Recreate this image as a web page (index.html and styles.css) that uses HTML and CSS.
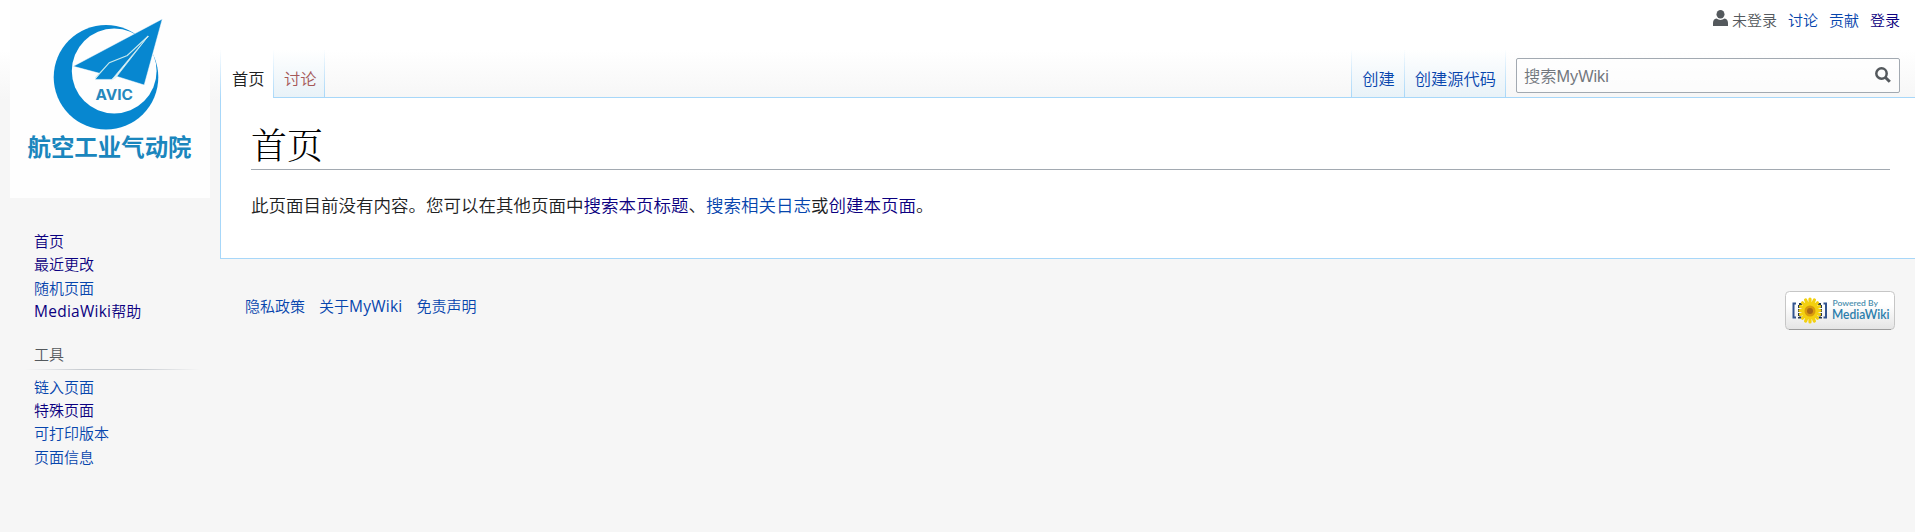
FILE: index.html
```html
<!DOCTYPE html>
<html lang="zh-CN">
<head>
<meta charset="utf-8">
<title>首页 - MyWiki</title>
<link rel="stylesheet" href="styles.css">
</head>
<body>
<div class="page">
  <aside class="sidebar">
    <a class="logo" href="#">
      <svg width="200" height="198" viewBox="10 0 200 198">
        <rect x="10" y="0" width="200" height="198" fill="#fefefe"/>
        <circle cx="106" cy="77.300" r="52.3" fill="#0787d0"/>
        <circle cx="114.2" cy="71" r="42.4" fill="#fefefe"/>
        <path d="M162.300 19 73.300 66.300 99.500 73.300 95 79.400H111.500L117 76.500 144.200 85Z" fill="#0787d0" stroke="#fefefe" stroke-width=".5"/>
        <path d="M95.500 78 109.300 62.700 127.300 55.500 148.300 36" fill="none" stroke="#c8e9ed" stroke-width="1.200"/>
        <path d="M148.300 36 111.500 80 115.500 78Z" fill="#e4f5f7" stroke="#d8eff2" stroke-width=".7"/>
        <text class="logo-mark" x="95.500" y="100" textLength="37.500" lengthAdjust="spacingAndGlyphs">AVIC</text>
        <text class="logo-name" x="27.500" y="156" textLength="164" lengthAdjust="spacingAndGlyphs">航空工业气动院</text>
      </svg>
    </a>
    <nav class="menu menu-main">
      <a class="visited" href="#">首页</a>
      <a class="visited" href="#">最近更改</a>
      <a href="#">随机页面</a>
      <a class="visited" href="#"><span class="latin">MediaWiki</span>帮助</a>
    </nav>
    <h3 class="menu-title">工具</h3>
    <nav class="menu">
      <a href="#">链入页面</a>
      <a class="visited" href="#">特殊页面</a>
      <a href="#">可打印版本</a>
      <a href="#">页面信息</a>
    </nav>
  </aside>
  <div class="main">
    <header class="head">
      <div class="personal">
        <span class="user"><svg width="15" height="17" viewBox="0 0 15 17"><ellipse cx="7.500" cy="4.300" rx="4" ry="4.300"/><path d="M3.500 8.600C5.800 10.400 9.200 10.400 11.500 8.600 14 9 15 11 15 13V16H0V13C0 11 1 9 3.500 8.600Z"/></svg>未登录</span>
        <a href="#">讨论</a>
        <a href="#">贡献</a>
        <a class="visited" href="#">登录</a>
      </div>
      <div class="bar">
        <div class="tabs tabs-left">
          <a class="tab selected" href="#">首页</a>
          <a class="tab new" href="#">讨论</a>
        </div>
        <div class="tabs tabs-right">
          <a class="tab" href="#">创建</a>
          <a class="tab" href="#">创建源代码</a>
        </div>
        <div class="search">
          <span>搜索MyWiki</span>
          <svg width="16" height="16" viewBox="0 0 16 16" fill="none" stroke="#54595d"><circle cx="6.500" cy="6.500" r="5.200" stroke-width="2.500"/><path d="M10.200 10.200 14.800 14.800" stroke-width="3"/></svg>
        </div>
      </div>
    </header>
    <main class="content">
      <h1>首页</h1>
      <p>此页面目前没有内容。您可以在其他页面中<a class="visited" href="#">搜索本页标题</a>、<a href="#">搜索相关日志</a>或<a class="visited" href="#">创建本页面</a>。</p>
    </main>
    <footer class="footer">
      <nav class="places">
        <a href="#">隐私政策</a>
        <a href="#">关于<span class="latin">MyWiki</span></a>
        <a href="#">免责声明</a>
      </nav>
      <a class="powered" href="#">
        <svg width="110" height="39" viewBox="0 0 110 39">
          <defs><linearGradient id="badge" x2="0" y2="1"><stop offset=".35" stop-color="#fff"/><stop offset="1" stop-color="#e4e4e4"/></linearGradient></defs>
          <rect x=".5" y=".5" width="109" height="38" rx="4" fill="url(#badge)" stroke="#c6c6c6"/>
          <path d="M4 38.500H106" stroke="#9c9c9c"/>
          <g fill="none" stroke="#32548f" stroke-width="2"><path d="M11 12.500H8.500V26.500H11M38.500 12.500H41V26.500H38.500"/><path d="M17 13H14V26.500H17M33 13H36V26.500H33" stroke="#26364f" stroke-width="2" stroke-dasharray="3 1"/></g>
          <g stroke="#f3d010" stroke-width="3.200" stroke-linecap="round"><path d="M25 8V31M15 19.500H35M17.500 11.800 32.500 27.200M17.500 27.200 32.500 11.800M20.600 8.900 29.400 30.100M15.500 15.500 34.500 23.500M15.500 23.500 34.500 15.500M20.600 30.100 29.400 8.900"/></g>
          <circle cx="25" cy="20" r="5.500" fill="#d99b0c"/><circle cx="25" cy="20" r="3" fill="#a86818"/>
          <text class="by" x="47.500" y="15" textLength="45.500" lengthAdjust="spacingAndGlyphs">Powered By</text>
          <text class="mw" x="47" y="27.500" textLength="57.500" lengthAdjust="spacingAndGlyphs">MediaWiki</text>
        </svg>
      </a>
    </footer>
  </div>
</div>
</body>
</html>
```
FILE: styles.css
```css
* { box-sizing: border-box; }
body {
  margin: 0;
  background: #f6f6f6;
  color: #202122;
  font-family: "Open Sans", "Noto Sans CJK SC", sans-serif;
  font-size: 15px;
  font-weight: 350;
}
a { color: #0645ad; text-decoration: none; }
a.visited { color: #0b0080; }
svg { display: block; flex: none; }
.latin { font-family: "Open Sans", sans-serif; font-weight: 400; font-size: 15.5px; letter-spacing: .25px; line-height: 1; }

.page {
  display: flex;
  min-height: 532px;
  background: linear-gradient(#fff 50%, #f6f6f6) 0 0 / 100% 100px no-repeat;
}
.sidebar { width: 220px; flex: none; padding-left: 10px; }
.logo { display: block; height: 198px; }
.logo-mark { font: bold 14px Inter, "Liberation Sans", sans-serif; fill: #2688bd; }
.logo-name { font: bold 23.4px "Noto Sans CJK SC", sans-serif; fill: #1a86bd; }

.menu { display: flex; flex-direction: column; padding-left: 24px; }
.menu a { line-height: 23.4px; height: 23.4px; white-space: nowrap; }
.menu-main { padding-top: 32px; }
.menu-title {
  margin: 20px 20px 6px 15px;
  padding-left: 9px;
  height: 26px;
  line-height: 21px;
  font-size: 15px;
  font-weight: 350;
  color: #54595d;
  background: linear-gradient(to right, rgba(200,204,209,0), #c8ccd1 33%, #c8ccd1 66%, rgba(200,204,209,0)) 0 100% / 100% 1px no-repeat;
}

.main { flex: 1; min-width: 0; }
.head { height: 97px; display: flex; flex-direction: column; justify-content: space-between; }
.personal {
  display: flex;
  justify-content: flex-end;
  gap: 11px;
  padding: 10px 15px 0 0;
  line-height: 21px;
}
.user { display: flex; gap: 4px; color: #54595d; fill: #54595d; }
.bar { position: relative; display: flex; height: 47px; font-size: 16.25px; }
.tabs { display: flex; }
.tabs-right { margin-left: auto; }
.tab {
  display: block;
  padding: 17px 9px 0 10px;
  line-height: 24px;
  white-space: nowrap;
  border-right: 1px solid;
  border-image: linear-gradient(rgba(167,215,249,0), #a7d7f9) 1;
  background: linear-gradient(#fff, #e8f2f8);
}
.tabs-left .tab:first-child, .tabs-right .tab:first-child { border-left: 1px solid; }
.tab.selected {
  width: 54px;
  padding: 17px 0 0 11px;
  height: 48px;
  background: #fff;
  color: #202122;
}
.tab.new { width: 51px; padding-right: 0; color: #a55858; }
.search {
  display: flex;
  align-items: center;
  justify-content: space-between;
  width: 384px;
  height: 35px;
  margin: 8px 15px 0 10px;
  padding: 0 8px 2px 7px;
  border: 1px solid #a2a9b1;
  border-radius: 2px;
  background: rgba(255,255,255,.5);
  color: #72777d;
  font-family: "Liberation Sans", "Noto Sans CJK SC", sans-serif;
}

.content {
  height: 162px;
  padding: 25px 25px 0 30px;
  border: 1px solid #a7d7f9;
  border-right: 0;
  background: #fff;
}
h1 {
  margin: 0;
  height: 47px;
  padding-top: 1px;
  border-bottom: 1px solid #a2a9b1;
  color: #000;
  font: 300 36px/46px "Liberation Serif", "Noto Serif CJK SC", "Noto Sans CJK SC", serif;
}
p { margin: 21px 0 0; font-size: 17.5px; line-height: 28px; }

.footer { display: flex; justify-content: space-between; padding: 32px 20px 0 25px; }
.places { display: flex; gap: 14px; padding-top: 5px; line-height: 21px; }
.by { font: 600 8px Lato, sans-serif; fill: #4a8dad; }
.mw { font: 600 12.5px Lato, sans-serif; fill: #2a7dac; }
```
